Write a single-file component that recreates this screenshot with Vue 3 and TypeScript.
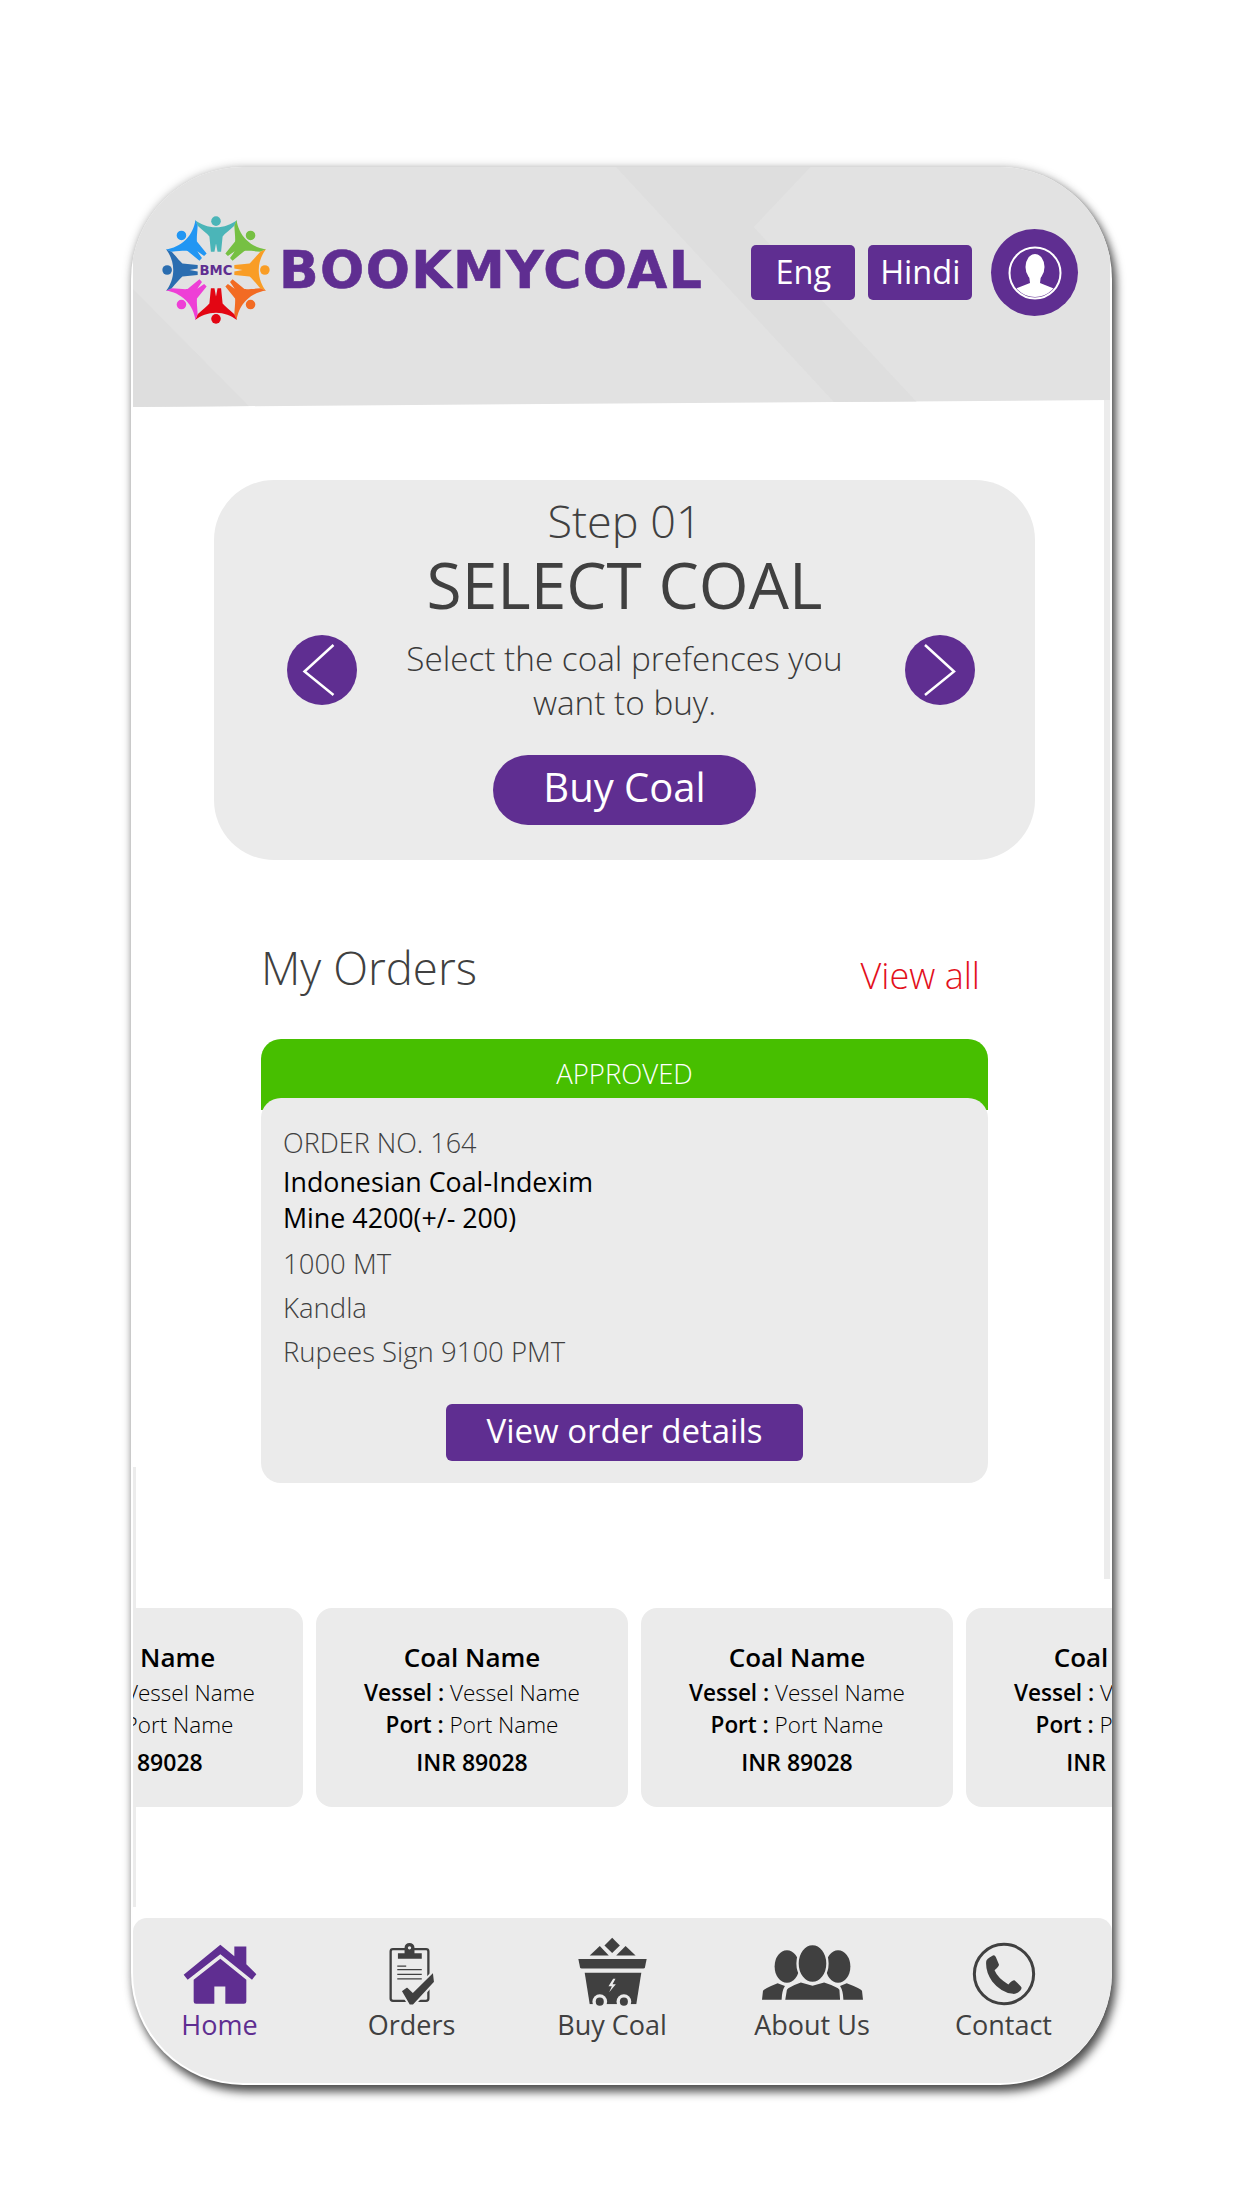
<script setup lang="ts">
// Coal booking home screen inside a rounded phone frame.
const purple = '#5f2e91';

const petals = [
  { angle: 0, color: '#4bb5b8' },
  { angle: 45, color: '#76c043' },
  { angle: 90, color: '#f99d25' },
  { angle: 135, color: '#f26b23' },
  { angle: 180, color: '#e30613' },
  { angle: 225, color: '#ee3fd6' },
  { angle: 270, color: '#2a6db0' },
  { angle: 315, color: '#2196f3' },
];

const coalCards = [1, 2, 3, 4];
</script>

<template>
  <div class="page">
    <div class="phone">
      <!-- leftover light bars along the frame edges -->
      <i class="edge edge-r"></i>
      <i class="edge edge-l"></i>

      <header class="top">
        <svg class="facets" viewBox="0 0 979 240" preserveAspectRatio="none" aria-hidden="true">
          <polygon points="484,0 679,0 622,60 790,240 707,240" fill="#dedede" />
          <polygon points="0,122 117,240 0,240" fill="#dedede" />
        </svg>
        <div class="brand">
          <svg class="logo" viewBox="-56 -56 112 112" aria-hidden="true">
            <g v-for="p in petals" :key="p.angle" :transform="`rotate(${p.angle})`" :fill="p.color">
              <circle cx="0" cy="-48" r="4.700" />
              <path d="M-20.500-49C-15-45-8-42 0-42 8-42 15-45 20.500-49L18-43.500C13-39 9-36 6.500-33L5-18 1.500-18 0-26-1.500-18-5-18-6.500-33C-9-36-13-39-18-43.500Z" />
            </g>
            <text x="0" y="4.500" class="logo-mark">BMC</text>
          </svg>
          <span class="wordmark">BOOKMYCOAL</span>
        </div>
        <div class="top-actions">
          <button class="lang">Eng</button>
          <button class="lang">Hindi</button>
          <span class="avatar">
            <svg viewBox="0 0 56 56" width="56" height="56" aria-hidden="true">
              <clipPath id="ring"><circle cx="28" cy="28" r="24" /></clipPath>
              <circle cx="28" cy="28" r="25.500" fill="none" stroke="#fff" stroke-width="2" />
              <g clip-path="url(#ring)" fill="#fff">
                <ellipse cx="28" cy="22" rx="9.500" ry="13" />
                <path d="M22 30 23 38 8 44V56H48V44L33 38 34 30Z" />
              </g>
            </svg>
          </span>
        </div>
      </header>

      <section class="step-card">
        <div class="step-no">Step 01</div>
        <h1 class="step-title">SELECT COAL</h1>
        <div class="step-row">
          <button class="arrow" aria-label="Previous">
            <svg viewBox="0 0 70 70" width="70" height="70"><path d="M46.500 10 17.500 36.500 46.500 60" /></svg>
          </button>
          <p class="step-text">Select the coal prefences you<br />want to buy.</p>
          <button class="arrow" aria-label="Next">
            <svg viewBox="0 0 70 70" width="70" height="70"><path d="M20 10 49 36.500 20 60" /></svg>
          </button>
        </div>
        <button class="buy">Buy Coal</button>
      </section>

      <div class="orders-head">
        <h2>My Orders</h2>
        <a class="view-all">View all</a>
      </div>

      <article class="order">
        <div class="status">APPROVED</div>
        <div class="order-body">
          <div class="line order-no">ORDER NO. 164</div>
          <div class="coal">Indonesian Coal-Indexim<br />Mine 4200(+/- 200)</div>
          <div class="line qty">1000 MT</div>
          <div class="line gap">Kandla</div>
          <div class="line gap">Rupees Sign 9100 PMT</div>
          <button class="details">View order details</button>
        </div>
      </article>

      <div class="strip">
        <div class="track">
          <div v-for="c in coalCards" :key="c" class="coal-card">
            <div class="coal-name">Coal Name</div>
            <div class="coal-meta first"><b>Vessel :</b> Vessel Name</div>
            <div class="coal-meta"><b>Port :</b> Port Name</div>
            <div class="coal-price">INR 89028</div>
          </div>
        </div>
      </div>

      <nav class="nav">
        <div class="nav-item active">
          <svg class="ico-home" viewBox="38 28 222 182" width="74" height="61" aria-hidden="true">
            <path :fill="purple" d="M150 30 192 64V35H228V88L258 118 245 135 150 58 52 135 40 120Z" />
            <path :fill="purple" d="M150 72 228 135V200Q228 207 221 207H165V155H132V207H77Q70 207 70 200V135Z" />
          </svg>
          <span>Home</span>
        </div>
        <div class="nav-item">
          <svg class="ico-orders" viewBox="650 22 145 195" width="48" height="65" aria-hidden="true">
            <rect x="658" y="46" width="114" height="156" rx="7" fill="none" stroke="#404040" stroke-width="7" />
            <path fill="#404040" d="M680 75V58H700V42A15 15 0 0 1 730 42V58H752V75Z" />
            <circle cx="715" cy="42" r="5" fill="#ebebeb" />
            <path stroke="#404040" stroke-width="4" d="M678 97H705M678 108H752M678 122H752M678 136H752" />
            <path fill="#404040" stroke="#ebebeb" stroke-width="6" d="M688 172 708 158 725 174 788 112 792 146 727 216 714 216Z" />
          </svg>
          <span>Orders</span>
        </div>
        <div class="nav-item">
          <svg class="ico-cart" viewBox="80 22 212 212" width="71" height="71" aria-hidden="true">
            <g fill="#404040">
              <path d="M185 27 208 50 185 73 162 50Z" />
              <path d="M118 80 148 52 175 80Z" />
              <path d="M197 80 225 52 255 80Z" />
              <path d="M84 91H288L283 115Q282 119 278 119H94Q90 119 89 115Z" />
              <path d="M103 132H272L257 226H118Z" />
            </g>
            <circle cx="148" cy="218" r="22" fill="#ebebeb" />
            <circle cx="220" cy="218" r="22" fill="#ebebeb" />
            <rect x="100" y="226" width="180" height="10" fill="#ebebeb" />
            <circle cx="148" cy="218" r="12" fill="#404040" />
            <circle cx="220" cy="218" r="12" fill="#404040" />
            <path fill="#ebebeb" d="M188 150 174 172H184L176 190 196 166H186L195 150Z" />
          </svg>
          <span>Buy Coal</span>
        </div>
        <div class="nav-item">
          <svg class="ico-people" viewBox="630 45 310 170" width="103" height="57" aria-hidden="true">
            <g fill="#404040">
              <ellipse cx="708" cy="112" rx="37" ry="49" />
              <ellipse cx="862" cy="112" rx="37" ry="49" />
              <ellipse cx="785" cy="103" rx="45" ry="58.500" stroke="#ebebeb" stroke-width="7" />
              <path d="M633 212 636 185Q640 178 680 162L702 171Q693 185 692 212Z" />
              <path d="M937 212 934 185Q930 178 888 162L868 171Q877 185 878 212Z" />
              <path d="M703 212 708 182Q712 174 750 160L785 170 820 160Q862 174 866 182L868 212Z" />
            </g>
          </svg>
          <span>About Us</span>
        </div>
        <div class="nav-item">
          <svg class="ico-phone" viewBox="1266 38 190 190" width="64" height="64" aria-hidden="true">
            <circle cx="1361" cy="133" r="88" fill="none" stroke="#404040" stroke-width="9" />
            <path fill="#404040" d="M1308 97Q1308 88 1328 78 1334 76 1337 83L1346 105Q1347 111 1333 122 1342 145 1374 164 1387 150 1393 152L1411 170Q1416 175 1409 183 1398 193 1388 192 1352 188 1326 155 1306 126 1308 97Z" />
          </svg>
          <span>Contact</span>
        </div>
      </nav>
    </div>
  </div>
</template>

<style>
html,
body {
  margin: 0;
  background: #fff;
}
</style>

<style scoped>
.page {
  box-sizing: border-box;
  height: 2208px;
  padding: 167px 0 0 131px;
  font-family: 'Open Sans', 'Noto Sans', sans-serif;
  color: #404040;
}
button {
  font-family: inherit;
  border: 0;
  padding: 0;
  color: #fff;
  background: #5f2e91;
}
h1,
h2,
p {
  margin: 0;
  font-weight: 300;
}
.phone {
  position: relative;
  width: 981px;
  height: 1918px;
  display: flex;
  flex-direction: column;
  overflow: hidden;
  background: #fff;
  border-radius: 112px;
  box-shadow: 4px 7px 10px rgba(0, 0, 0, 0.65), 0 0 10px rgba(0, 0, 0, 0.25);
}
.edge {
  position: absolute;
  background: #ececec;
}
.edge-r {
  top: 232px;
  right: 2px;
  width: 6px;
  height: 1180px;
}
.edge-l {
  top: 1300px;
  left: 2px;
  width: 3px;
  height: 440px;
}
.top {
  position: relative;
  flex: none;
  height: 240px;
  margin-left: 2px;
  width: 977px;
  display: flex;
  align-items: flex-start;
  background: #e2e2e2;
  clip-path: polygon(0 0, 100% 0, 100% 233px, 0 100%);
}
.facets {
  position: absolute;
  inset: 0;
  width: 100%;
  height: 100%;
}
.brand {
  position: relative;
  display: flex;
  align-items: center;
  margin: 46px 0 0 26px;
  gap: 6px;
}
.logo {
  width: 114px;
  height: 114px;
}
.logo-mark {
  font: 700 13px 'DejaVu Sans', sans-serif;
  fill: #5f2e91;
  text-anchor: middle;
}
.wordmark {
  font: 700 52px/1 'DejaVu Sans', sans-serif;
  letter-spacing: 1.4px;
  color: #5f2e91;
  -webkit-text-stroke: 0.6px #5f2e91;
}
.top-actions {
  position: relative;
  display: flex;
  align-items: center;
  gap: 13px;
  margin: 62px 0 0 48px;
}
.lang {
  width: 104px;
  height: 55px;
  padding-bottom: 3px;
  font-size: 32.500px;
  border-radius: 5px;
}
.avatar {
  width: 87px;
  height: 87px;
  margin-left: 6px;
  border-radius: 50%;
  background: #5f2e91;
  display: flex;
  align-items: center;
  justify-content: center;
}
.step-card {
  flex: none;
  box-sizing: border-box;
  width: 821px;
  height: 380px;
  margin: 73px 0 0 83px;
  padding-top: 13px;
  display: flex;
  flex-direction: column;
  align-items: center;
  background: #ebebeb;
  border-radius: 60px;
  text-align: center;
}
.step-no {
  font-size: 45px;
  font-weight: 300;
  line-height: 56px;
}
.step-title {
  font-size: 64px;
  font-weight: 400;
  line-height: 72px;
}
/* arrows sit a little right of the card's centre, the text does not */
.step-row {
  width: 688px;
  margin: 15px 0 0 13px;
  display: grid;
  grid-template-columns: 70px 1fr 70px;
}
.arrow {
  width: 70px;
  height: 70px;
  margin-top: -1px;
  border-radius: 50%;
}
.arrow svg {
  display: block;
  fill: none;
  stroke: #fff;
  stroke-width: 2.500;
}
.step-text {
  padding-right: 13px;
  font-size: 33.300px;
  line-height: 44px;
  color: #3a3a3a;
}
.buy {
  width: 263px;
  height: 70px;
  margin-top: 31px;
  padding-bottom: 7px;
  border-radius: 35px;
  font-size: 40px;
}
.orders-head {
  flex: none;
  width: 719px;
  margin: 79px 0 0 130px;
  display: flex;
  justify-content: space-between;
}
.orders-head h2 {
  font-size: 45.600px;
  line-height: 56px;
}
.view-all {
  margin-top: 15px;
  font-size: 36px;
  font-weight: 300;
  line-height: 44px;
  color: #e3101c;
}
.order {
  flex: none;
  width: 727px;
  margin: 41px 0 0 130px;
}
.status {
  height: 71px;
  box-sizing: border-box;
  padding-top: 13px;
  background: #47bf00;
  border-radius: 20px 20px 0 0;
  color: #fff;
  font-size: 27.500px;
  font-weight: 300;
  line-height: 44px;
  text-align: center;
}
.order-body {
  position: relative;
  margin-top: -12px;
  height: 385px;
  box-sizing: border-box;
  padding: 28px 22px 0;
  background: #ebebeb;
  border-radius: 20px;
  display: flex;
  flex-direction: column;
}
.line {
  font-size: 27.500px;
  font-weight: 300;
  line-height: 34px;
}
.order-no {
  font-size: 27px;
}
.coal {
  margin-top: 4px;
  font-size: 26.800px;
  line-height: 36px;
  color: #000;
}
.qty {
  margin-top: 11px;
}
.gap {
  margin-top: 10px;
}
.details {
  width: 357px;
  height: 57px;
  margin: 35px auto 0;
  padding-bottom: 4px;
  border-radius: 6px;
  font-size: 33px;
}
.strip {
  position: relative;
  flex: none;
  margin: 125px 0 0 2px;
  overflow: hidden;
  background: #fff;
}
.track {
  display: flex;
  gap: 13px;
  margin-left: -142px;
}
.coal-card {
  flex: none;
  width: 312px;
  height: 199px;
  box-sizing: border-box;
  padding-top: 32px;
  background: #ebebeb;
  border-radius: 16px;
  color: #000;
  text-align: center;
}
.coal-name {
  font-size: 26px;
  font-weight: 600;
  line-height: 34px;
}
.coal-meta {
  font-size: 22.500px;
  line-height: 32px;
  font-weight: 300;
}
.coal-meta.first {
  margin-top: 3px;
}
.coal-meta b {
  font-weight: 600;
}
.coal-price {
  margin-top: 5px;
  font-size: 23px;
  font-weight: 600;
  line-height: 32px;
}
.nav {
  margin: auto 0 2px 2px;
  height: 165px;
  box-sizing: border-box;
  padding-top: 18px;
  display: grid;
  grid-template-columns: 173px 211px 190px 210px 173px;
  background: #ebebeb;
  border-radius: 14px 14px 110px 110px;
}
.nav-item {
  display: flex;
  flex-direction: column;
  align-items: center;
}
.nav-item svg {
  flex: none;
}
.ico-home {
  margin-top: 8px;
}
.ico-orders {
  margin-top: 5px;
}
.ico-people {
  margin-top: 8px;
}
.ico-phone {
  margin-top: 6px;
}
.nav-item span {
  position: absolute;
  bottom: 42px;
  font-size: 27px;
  line-height: 36px;
}
.nav-item.active span {
  color: #5f2e91;
}
</style>
